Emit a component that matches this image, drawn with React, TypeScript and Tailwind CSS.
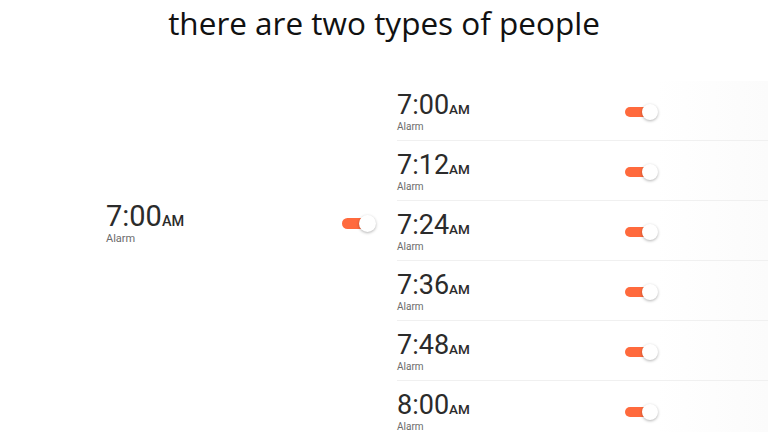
import React from "react";

const times = ["7:00", "7:12", "7:24", "7:36", "7:48", "8:00"];

function Toggle({ big }: { big?: boolean }) {
  return (
    <div className={big ? "relative w-[34px] h-[17px] shrink-0" : "relative w-[33px] h-[16px] shrink-0"}>
      <div className={big ? "absolute left-0 top-[3px] w-[26px] h-[11px] rounded-full bg-[#ff6a3d]" : "absolute left-0 top-[3px] w-[25px] h-[10px] rounded-full bg-[#ff6a3d]"} />
      <div className={big ? "absolute right-0 top-0 w-[17px] h-[17px] rounded-full bg-white shadow-[0_1px_3px_rgba(0,0,0,0.3)]" : "absolute right-0 top-0 w-4 h-4 rounded-full bg-white shadow-[0_1px_3px_rgba(0,0,0,0.3)]"} />
    </div>
  );
}

export default function App() {
  return (
    <div className="w-[768px] h-[432px] overflow-hidden bg-white" style={{ fontFamily: "Roboto, sans-serif" }}>
      <div className="h-[81px] pt-[3px] text-center text-[31.5px] leading-[40px] text-[#111]" style={{ fontFamily: "'Open Sans', sans-serif" }}>
        there are two types of people
      </div>
      <div className="flex">
        <div className="w-[397px] shrink-0 pt-[121px] pl-[106px]">
          <div className="flex items-start">
            <div className="w-[236px]">
              <div className="text-[29px] leading-[29px] text-[#2b2b2b]">
                7:00<span className="text-[14.5px] font-medium">AM</span>
              </div>
              <div className="text-[11px] leading-[12px] text-[#6b6b6b] -mt-[3px]">Alarm</div>
            </div>
            <div className="mt-[13px]">
              <Toggle big />
            </div>
          </div>
        </div>
        <div className="flex-1 bg-[linear-gradient(to_right,#ffffff_70%,#fbfbfb)]">
          {times.map((t) => (
            <div key={t} className="h-[60px] border-b border-[#f0f0f0] flex items-start pt-[11px] box-border">
              <div className="w-[228px]">
                <div className="text-[27px] leading-[27px] text-[#2b2b2b]">
                  {t}<span className="text-[13.5px] font-medium">AM</span>
                </div>
                <div className="text-[10px] leading-[12px] text-[#6b6b6b] -mt-[2px]">Alarm</div>
              </div>
              <div className="mt-[12px]">
                <Toggle />
              </div>
            </div>
          ))}
        </div>
      </div>
    </div>
  );
}
